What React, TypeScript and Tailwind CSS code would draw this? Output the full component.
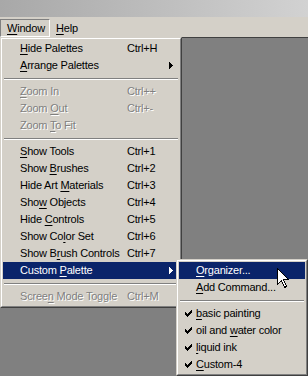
import React from "react";

type Item =
  | { sep: true }
  | {
      sep?: false;
      label: string;
      u: number;
      sc?: string;
      dis?: boolean;
      arrow?: boolean;
      hi?: boolean;
      check?: boolean;
    };

const mainItems: Item[] = [
  { label: "Hide Palettes", u: 0, sc: "Ctrl+H" },
  { label: "Arrange Palettes", u: 0, arrow: true },
  { sep: true },
  { label: "Zoom In", u: 0, sc: "Ctrl++", dis: true },
  { label: "Zoom Out", u: 5, sc: "Ctrl+-", dis: true },
  { label: "Zoom To Fit", u: 5, dis: true },
  { sep: true },
  { label: "Show Tools", u: 0, sc: "Ctrl+1" },
  { label: "Show Brushes", u: 5, sc: "Ctrl+2" },
  { label: "Hide Art Materials", u: 9, sc: "Ctrl+3" },
  { label: "Show Objects", u: 3, sc: "Ctrl+4" },
  { label: "Hide Controls", u: 5, sc: "Ctrl+5" },
  { label: "Show Color Set", u: 7, sc: "Ctrl+6" },
  { label: "Show Brush Controls", u: 6, sc: "Ctrl+7" },
  { label: "Custom Palette", u: 7, arrow: true, hi: true },
  { sep: true },
  { label: "Screen Mode Toggle", u: 5, sc: "Ctrl+M", dis: true },
];

const subItems: Item[] = [
  { label: "Organizer...", u: 0, hi: true },
  { label: "Add Command...", u: 0 },
  { sep: true },
  { label: "basic painting", u: 0, check: true },
  { label: "oil and water color", u: 8, check: true },
  { label: "liquid ink", u: 0, check: true },
  { label: "Custom-4", u: 0, check: true },
];

function Label({ text, u }: { text: string; u: number }) {
  return (
    <span className="whitespace-pre">
      {text.slice(0, u)}
      <span className="underline decoration-1 underline-offset-[2px]">{text.charAt(u)}</span>
      {text.slice(u + 1)}
    </span>
  );
}

const checkPixels: [number, number][] = [
  [6, 0],
  [5, 1], [6, 1],
  [0, 2], [4, 2], [5, 2], [6, 2],
  [0, 3], [1, 3], [3, 3], [4, 3], [5, 3],
  [0, 4], [1, 4], [2, 4], [3, 4], [4, 4],
  [1, 5], [2, 5], [3, 5],
  [2, 6],
];

function Check({ color }: { color: string }) {
  return (
    <svg width="7" height="7" viewBox="0 0 7 7" shapeRendering="crispEdges">
      {checkPixels.map(([x, y], i) => (
        <rect key={i} x={x} y={y} width="1" height="1" fill={color} />
      ))}
    </svg>
  );
}

function Arrow({ color }: { color: string }) {
  return (
    <svg width="4" height="7" viewBox="0 0 4 7" shapeRendering="crispEdges">
      <rect x="0" y="0" width="1" height="7" fill={color} />
      <rect x="1" y="1" width="1" height="5" fill={color} />
      <rect x="2" y="2" width="1" height="3" fill={color} />
      <rect x="3" y="3" width="1" height="1" fill={color} />
    </svg>
  );
}

function Separator() {
  return (
    <div className="h-[9px] pt-[4px] px-[1px]">
      <div className="h-[1px] bg-[#808080]" />
      <div className="h-[1px] bg-white" />
    </div>
  );
}

function MenuRow({ item, sub }: { item: Exclude<Item, { sep: true }>; sub?: boolean }) {
  const base = item.hi
    ? "bg-[#0a246a] text-white"
    : item.dis
    ? "text-[#808080] [text-shadow:1px_1px_0_#ffffff]"
    : "text-black";
  return (
    <div className={`relative flex h-[17px] items-center ${base}`}>
      {sub ? (
        <>
          <div className="flex w-[17px] justify-center pl-[1px]">
            {item.check && <Check color={item.hi ? "#ffffff" : "#000000"} />}
          </div>
          <Label text={item.label} u={item.u} />
        </>
      ) : (
        <>
          <div className="w-[124px] pl-[17px]">
            <Label text={item.label} u={item.u} />
          </div>
          <div className="flex-1">{item.sc}</div>
          {item.arrow && (
            <div className="absolute right-[6px] top-[5px] flex">
              <Arrow color={item.hi ? "#ffffff" : "#000000"} />
            </div>
          )}
        </>
      )}
    </div>
  );
}

function MenuFrame({ children, className }: { children: React.ReactNode; className: string }) {
  return (
    <div
      className={`absolute border border-t-[#d4d0c8] border-l-[#d4d0c8] border-r-[#404040] border-b-[#404040] bg-[#d4d0c8] ${className}`}
    >
      <div className="border border-t-white border-l-white border-r-[#808080] border-b-[#808080] p-[1px]">
        {children}
      </div>
    </div>
  );
}

function Cursor() {
  return (
    <svg
      className="absolute left-[277px] top-[268px]"
      width="13"
      height="21"
      viewBox="0 0 13 21"
      shapeRendering="crispEdges"
    >
      <path
        d="M0.5 0.5 L0.5 16.5 L4.5 12.5 L7.5 19.5 L9.5 18.5 L6.5 11.5 L11.5 11.5 Z"
        fill="#ffffff"
        stroke="#000000"
        strokeWidth="1"
        strokeLinejoin="miter"
      />
    </svg>
  );
}

export default function App() {
  return (
    <div className="relative h-[376px] w-[308px] overflow-hidden font-['Liberation_Sans',Arial,sans-serif] text-[11px] leading-none tracking-[-0.2px] text-black">
      <div className="h-[17px] bg-gradient-to-r from-[#a8a8a8] to-[#d2d2d2]" />
      <div className="flex h-[20px] items-start bg-[#d4d0c8] pt-[2px]">
        <div className="flex h-[18px] w-[50px] items-center border border-t-[#808080] border-l-[#808080] border-r-white border-b-white pl-[6px]">
          <Label text="Window" u={0} />
        </div>
        <div className="flex h-[18px] items-center pl-[6px]">
          <Label text="Help" u={0} />
        </div>
      </div>
      <div className="h-[339px] border-t border-t-[#404040] bg-[#808080]" />

      <MenuFrame className="left-0 top-[37px] w-[182px]">
        {mainItems.map((it, i) =>
          it.sep ? <Separator key={i} /> : <MenuRow key={i} item={it} />
        )}
      </MenuFrame>

      <MenuFrame className="left-[176px] top-[259px] w-[132px]">
        {subItems.map((it, i) =>
          it.sep ? <Separator key={i} /> : <MenuRow key={i} item={it} sub />
        )}
      </MenuFrame>

      <Cursor />
    </div>
  );
}
